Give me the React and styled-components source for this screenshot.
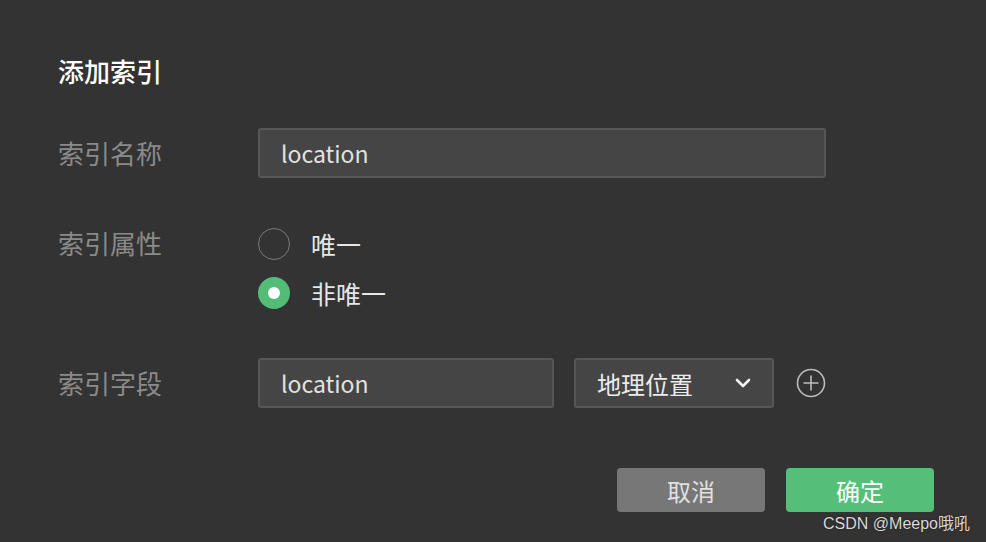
import React, { useState } from 'react';
import styled, { createGlobalStyle } from 'styled-components';

const GlobalStyle = createGlobalStyle`
  html, body {
    margin: 0;
    padding: 0;
    background: #333333;
  }
  body {
    font-family: "Noto Sans CJK SC", "Noto Sans", sans-serif;
  }
`;

const Dialog = styled.div`
  position: relative;
  box-sizing: border-box;
  width: 986px;
  height: 542px;
  padding: 55px 52px 0 58px;
  background: #333333;
  display: flex;
  flex-direction: column;
`;

const Title = styled.h2`
  margin: 0;
  font-size: 26px;
  line-height: 32px;
  font-weight: 500;
  color: #ffffff;
`;

const Form = styled.div`
  margin-top: 41px;
  display: flex;
  flex-direction: column;
`;

const Row = styled.div`
  display: grid;
  grid-template-columns: 200px 1fr;
  align-items: start;
  margin-top: ${p => p.gap || 0}px;
`;

const Label = styled.div`
  font-size: 26px;
  line-height: ${p => p.lh || 50}px;
  color: #8a8a8a;
`;

const Input = styled.div`
  box-sizing: border-box;
  width: ${p => p.width}px;
  height: 50px;
  padding: 0 21px;
  background: #454545;
  border: 2px solid #575757;
  border-radius: 3px;
  font-size: 23px;
  line-height: 46px;
  color: #e2e2e2;
`;

const Controls = styled.div`
  display: flex;
  align-items: center;
  gap: 20px;
`;

const RadioGroup = styled.div`
  display: flex;
  flex-direction: column;
  gap: 13px;
`;

const RadioItem = styled.label`
  display: flex;
  align-items: center;
  gap: 21px;
  height: 36px;
  font-size: 25px;
  color: #e6e6e6;
  cursor: pointer;
`;

const RadioCircle = styled.span`
  box-sizing: border-box;
  width: 32px;
  height: 32px;
  border-radius: 50%;
  border: ${p => (p.checked ? 'none' : '1.5px solid #7a7a7a')};
  background: ${p => (p.checked ? '#53bd78' : 'transparent')};
  display: flex;
  align-items: center;
  justify-content: center;
  &::after {
    content: '';
    display: ${p => (p.checked ? 'block' : 'none')};
    width: 12px;
    height: 12px;
    border-radius: 50%;
    background: #ffffff;
  }
`;

const Select = styled.div`
  box-sizing: border-box;
  width: 200px;
  height: 50px;
  padding: 0 21px;
  background: #454545;
  border: 2px solid #575757;
  border-radius: 3px;
  display: flex;
  align-items: center;
  justify-content: space-between;
  font-size: 24px;
  color: #ececec;
`;

const AddButton = styled.button`
  margin-left: 2px;
  padding: 0;
  border: none;
  background: none;
  display: flex;
  cursor: pointer;
`;

const Footer = styled.div`
  margin-top: 60px;
  display: flex;
  justify-content: flex-end;
  gap: 21px;
`;

const Button = styled.button`
  width: 148px;
  height: 44px;
  border: none;
  border-radius: 4px;
  font-family: inherit;
  font-size: 24px;
  color: ${p => (p.primary ? '#ffffff' : '#e0e0e0')};
  background: ${p => (p.primary ? '#55bf7a' : '#777777')};
  cursor: pointer;
`;

const Watermark = styled.div`
  position: absolute;
  right: 16px;
  bottom: 8px;
  font-family: "Liberation Sans", "Noto Sans CJK SC", sans-serif;
  font-size: 16px;
  color: #d8d8d8;
  text-shadow: 0 0 2px rgba(0, 0, 0, 0.6);
`;

const Chevron = () => (
  <svg width="16" height="10" viewBox="0 0 16 10">
    <path d="M2 2l6 6 6-6" fill="none" stroke="#f0f0f0" strokeWidth="2.6" strokeLinecap="round" strokeLinejoin="round" />
  </svg>
);

const PlusCircle = () => (
  <svg width="30" height="30" viewBox="0 0 30 30">
    <circle cx="15" cy="15" r="13.5" fill="none" stroke="#bdbdbd" strokeWidth="1.6" />
    <path d="M15 7.5v15M7.5 15h15" stroke="#bdbdbd" strokeWidth="1.6" />
  </svg>
);

export default function App() {
  const [unique, setUnique] = useState(false);
  return (
    <>
      <GlobalStyle />
      <Dialog>
        <Title>添加索引</Title>
        <Form>
          <Row>
            <Label>索引名称</Label>
            <Input width={568}>location</Input>
          </Row>
          <Row gap={48}>
            <Label lh={34}>索引属性</Label>
            <RadioGroup>
              <RadioItem onClick={() => setUnique(true)}>
                <RadioCircle checked={unique} />
                唯一
              </RadioItem>
              <RadioItem onClick={() => setUnique(false)}>
                <RadioCircle checked={!unique} />
                非唯一
              </RadioItem>
            </RadioGroup>
          </Row>
          <Row gap={47}>
            <Label>索引字段</Label>
            <Controls>
              <Input width={296}>location</Input>
              <Select>
                地理位置
                <Chevron />
              </Select>
              <AddButton>
                <PlusCircle />
              </AddButton>
            </Controls>
          </Row>
        </Form>
        <Footer>
          <Button>取消</Button>
          <Button primary>确定</Button>
        </Footer>
        <Watermark>CSDN @Meepo哦吼</Watermark>
      </Dialog>
    </>
  );
}
